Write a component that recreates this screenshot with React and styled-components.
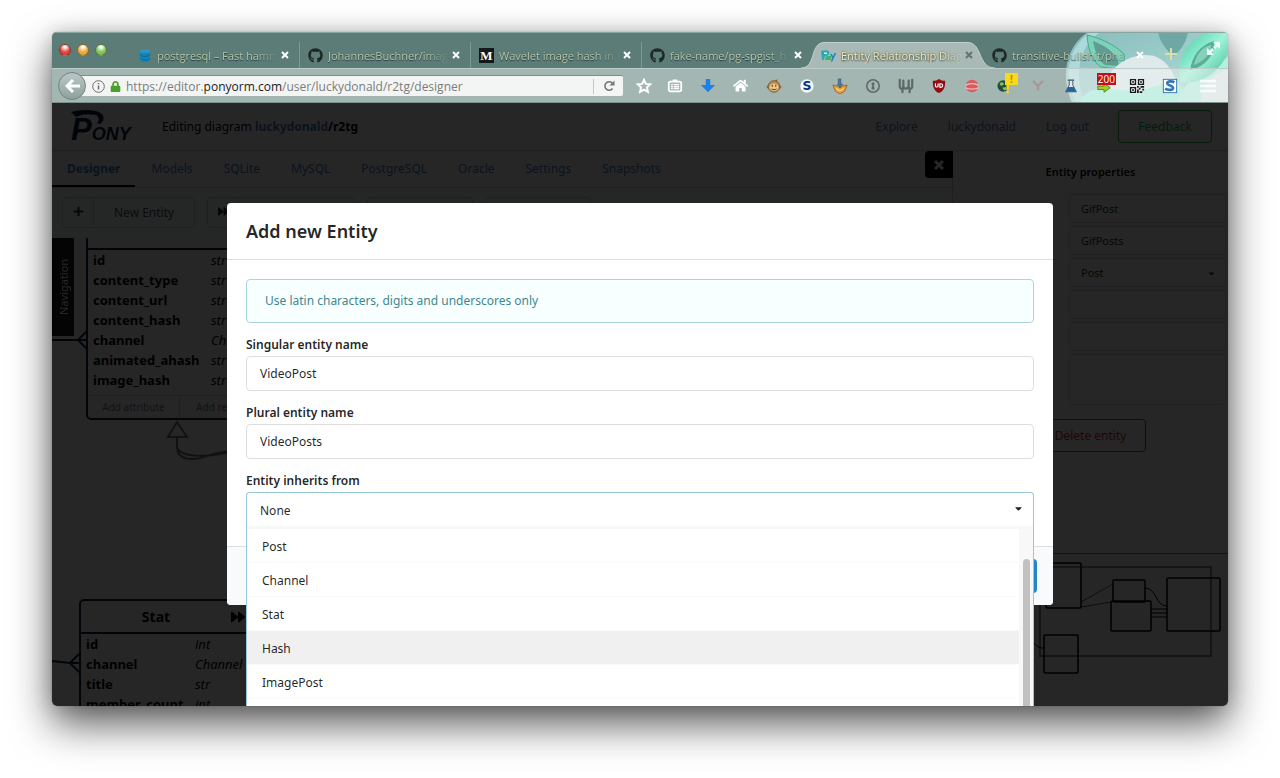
import React, { useState } from 'react'
import styled, { createGlobalStyle } from 'styled-components'
import { FaGithub, FaPlus, FaForward, FaLock, FaHome, FaCaretDown } from 'react-icons/fa'

const browserTabs = [
    { icon: 'database', title: 'postgresql – Fast hamm' },
    { icon: 'github', title: 'JohannesBuchner/imag' },
    { icon: 'medium', title: 'Wavelet image hash in P' },
    { icon: 'github', title: 'fake-name/pg-spgist_h' },
    { icon: 'pony', title: 'Entity Relationship Diag', active: true },
    { icon: 'github', title: 'transitive-bullshit/pha' },
];

const pageTabs = ['Designer', 'Models', 'SQLite', 'MySQL', 'PostgreSQL', 'Oracle', 'Settings', 'Snapshots'];

const postRows = [
    ['id', 'str'],
    ['content_type', 'str'],
    ['content_url', 'str'],
    ['content_hash', 'str'],
    ['channel', 'Channel'],
    ['animated_ahash', 'str'],
    ['image_hash', 'str'],
];

const statRows = [
    ['id', 'int'],
    ['channel', 'Channel'],
    ['title', 'str'],
    ['member_count', 'int'],
];

const parents = ['Post', 'Channel', 'Stat', 'Hash', 'ImagePost', 'GifPost'];

const TabIcon = ({ name }) => {
    if (name === 'github') return <FaGithub size={15} color='#1d2926' />
    if (name === 'medium') {
        return (
            <svg width='15' height='15' viewBox='0 0 15 15'>
                <rect width='15' height='15' fill='#14191a' />
                <text x='7.5' y='12' textAnchor='middle' fontFamily='Liberation Serif, serif' fontWeight='700' fontSize='13' fill='#fff'>M</text>
            </svg>
        )
    }
    if (name === 'database') {
        return (
            <svg width='15' height='15' viewBox='0 0 15 15'>
                <path d='M3 3v9c0 3 10 3 10 0V3z' fill='#1683b8' />
                <ellipse cx='8' cy='3' rx='5' ry='2' fill='#2b95c6' />
                <path d='M3 6.500c0 2.500 10 2.500 10 0M3 10c0 2.500 10 2.500 10 0' fill='none' stroke='#0c6896' />
            </svg>
        )
    }
    return (
        <svg width='15' height='15' viewBox='0 0 15 15'>
            <path d='M0 3c3-1 6-1 8 0 1 3-1 5-4 5l-1 4H1z' fill='#2ba7b5' />
            <path d='M3 4.500h3v1.500H3z' fill='#d8f0ea' />
            <path d='M5 8h5v4H4z' fill='#3fb56c' />
            <path d='M10 6l2 4 2.500-5M12 10l-1.500 3.500' fill='none' stroke='#1f86c5' strokeWidth='1.600' />
        </svg>
    )
}

const PersonaArt = () => (
    <Persona viewBox='0 0 190 71' aria-hidden='true'>
        <defs>
            <linearGradient id='mane' x1='0' y1='0' x2='1' y2='1'>
                <stop offset='0' stopColor='#8fc6c8' />
                <stop offset='1' stopColor='#bff0e6' />
            </linearGradient>
            <linearGradient id='lock' x1='0' y1='0' x2='1' y2='1'>
                <stop offset='0' stopColor='#3fcb9f' />
                <stop offset='0.500' stopColor='#9ff3d8' />
                <stop offset='1' stopColor='#35b98f' />
            </linearGradient>
        </defs>
        <path d='M50 0C28 14 22 44 34 71h156V0z' fill='url(#mane)' opacity='0.850' />
        <path d='M52 0C30 16 24 44 38 71h9C36 44 40 16 62 0z' fill='#b4dfe2' opacity='0.800' />
        <path d='M120 0h30c-2 12-8 18-14 24-8-6-14-14-16-24z' fill='#6fa7a5' />
        <path d='M49 3c1 16 6 27 14 32 8 1 16 2 20 1 3-4 4-10 3-14C76 12 62 6 49 3z' fill='#7fd0b8' stroke='#36b08a' />
        <path d='M55 9c2 12 6 20 12 24l14 1C80 22 68 14 55 9z' fill='#5f9c94' />
        <path d='M68 48c8-16 24-25 40-25 16 0 30 12 36 48H80z' fill='#dde9eb' />
        <path d='M42 71c4-14 18-16 38-13 22 2 38-2 56-12l20 25z' fill='#9df3da' />
        <path d='M140 71c2-16 16-26 34-36l16-10v46z' fill='#b5efe0' />
        <path d='M142 50c-4-26 10-46 34-50h14v20c-6 16-24 34-48 30z' fill='url(#lock)' />
        <path d='M152 38c2-14 10-25 24-29 2 12-8 26-24 29z' fill='#5aaf98' />
        <path d='M156 33c2-10 8-18 17-20 0 8-6 16-17 20z' fill='#9adfcb' opacity='0.700' />
        <path d='M163 71c0-18 10-28 27-34v34z' fill='#dfe9e8' />
    </Persona>
)

const S = { fill: 'none', strokeLinecap: 'round', strokeLinejoin: 'round' };

const toolbarItems = [
    {
        label: 'Bookmarks list', art: <>
            <rect x='2' y='4' width='14' height='11' rx='2' {...S} stroke='#fff' strokeWidth='2' />
            <path d='M7 2.500h4M5 7.500h1M8 7.500h5M5 9.800h1M8 9.800h5M5 12h1M8 12h5' {...S} stroke='#fff' strokeWidth='1.500' />
        </>
    },
    { label: 'Downloads', art: <path d='M6.500 1h5v7H17l-8 8L1 8h5.500z' fill='#1c82ea' /> },
    { label: 'Home', art: <FaHome size={17} color='#fff' /> },
    {
        label: 'Greasemonkey', art: <>
            <circle cx='2.500' cy='10' r='1.800' fill='#9a6a35' />
            <circle cx='15.500' cy='10' r='1.800' fill='#9a6a35' />
            <path d='M9 4l4-3-1 4z' fill='#8a5c2a' />
            <circle cx='9' cy='9.500' r='6.500' fill='#b98a4e' stroke='#7d5a30' />
            <ellipse cx='9' cy='10.500' rx='5.200' ry='4.400' fill='#e9c88c' />
            <path d='M7 8v1.500M11 8v1.500M6.500 12.500c1.500 1 3.500 1 5 0' {...S} stroke='#3d2a14' />
        </>
    },
    {
        label: 'Stylish', art: <>
            <circle cx='9' cy='9' r='7.500' fill='#f4f8fa' />
            <text x='9' y='14' textAnchor='middle' fontFamily='DejaVu Sans, sans-serif' fontWeight='700' fontSize='14' fill='#0b2f86'>S</text>
        </>
    },
    {
        label: 'Video downloader', art: <>
            <path d='M1 8l5 1 3 2 3-2 5-1-3 7-5 3-5-3z' fill='#e9a13b' stroke='#a55f16' />
            <path d='M7 1h3v6h2l-3 4-3-4h1z' fill='#4c7aa0' stroke='#2d526f' strokeWidth='0.600' />
            <path d='M5 12l3 2M13 12l-3 2' {...S} stroke='#fff2cc' />
        </>
    },
    {
        label: 'Page info', art: <>
            <circle cx='9' cy='9' r='7' {...S} stroke='#5f6968' strokeWidth='1.800' />
            <path d='M7.500 5h3v3l-1 1 1 1v3h-3v-3l1-1-1-1z' fill='#5f6968' />
        </>
    },
    { label: 'Wappalyzer', art: <path d='M2 2v7c0 4 4 4 4 0V3M6 9c0 4 5 4 6 0V3M12 9c0 4 4 4 4 0V2M5 12v4M13 12v4' {...S} stroke='#5f6968' strokeWidth='2.500' /> },
    {
        label: 'uBlock', art: <>
            <path d='M9 1c2 1.500 4 2 7 2 0 7-1 11-7 14-6-3-7-7-7-14 3 0 5-.5 7-2z' fill='#960b12' />
            <path d='M5 6.500v2.500c0 1.500 3 1.500 3 0V6.500M10 6.500h1c2.800 0 2.800 4 0 4h-1z' {...S} stroke='#fff' strokeWidth='1.300' />
        </>
    },
    {
        label: 'Eraser', art: <>
            <circle cx='9' cy='9' r='7' fill='#d85b60' />
            <path d='M2 8.500c2-3 12-3 14 0M2 11c3 2 11 2 14 0' {...S} stroke='#f3bcbc' strokeWidth='1.500' />
        </>
    },
    {
        label: 'Proxy', badge: '!', tone: 'yellow', art: <>
            <circle cx='7' cy='9' r='6.500' fill='#1d4f42' />
            <path d='M3 6c3-3 6 0 4 2s-4 0-4-2zM6 11l4-1 1 3-3 1z' fill='#8bc34a' />
            <path d='M12 8v4M12 15.500v.500' {...S} stroke='#f5cf2c' strokeWidth='3' />
        </>
    },
    { label: 'Vue', art: <path d='M4 4l5 5 5-5M9 9v4' {...S} stroke='#a89594' strokeWidth='2.500' /> },
    {
        label: 'Experiments', art: <>
            <path d='M7 3v5l-4 7.500h12L11 8V3' fill='#dfeaf0' stroke='#38505e' />
            <path d='M6 10h6l3 5.500H3z' fill='#27649b' />
            <path d='M6 2.500h6' {...S} stroke='#38505e' strokeWidth='1.400' />
        </>
    },
    { label: 'Feed', badge: '200', tone: 'red', art: <path d='M2 9h7V6l7 5-7 5v-3H2z' fill='#9ccc2e' stroke='#55801c' /> },
    {
        label: 'QR code', art: <>
            <rect x='1' y='1' width='16' height='16' fill='#e4eaea' />
            <path d='M1 1h7v7H1zM10 1h7v7h-7zM1 10h7v7H1z' fill='#171b1c' />
            <path d='M3 3h3v3H3zM12 3h3v3h-3zM3 12h3v3H3z' fill='#171b1c' stroke='#fff' />
            <path d='M9 9h2v2H9zM13 9h4v2h-4zM11 11h2v2h-2zM15 12h2v2h-2zM9 13h2v4H9zM12 15h3v2h-3z' fill='#171b1c' />
        </>
    },
    {
        label: 'Scrapbook', art: <>
            <rect x='1.500' y='1.500' width='15' height='15' fill='#fff' stroke='#2f6eae' />
            <path d='M14 5c-3-2-9-1.500-8 1.500 1 2 6 2 6.500 4.500.500 3-6 3-9 1' fill='none' stroke='#2f78bd' strokeWidth='3' />
        </>
    },
];

const Entity = ({ title, rows, x, y, width, typeCol, footer }) => (
    <EntityBox style={{ left: x, top: y, width }}>
        <EntityTitle>
            <span>{title}</span>
            <FaForward size={14} />
        </EntityTitle>
        <EntityRows>
            {rows.map(([name, type]) => (
                <EntityRow key={name} $col={typeCol}>
                    <b>{name}</b>
                    <i>{type}</i>
                </EntityRow>
            ))}
        </EntityRows>
        {footer && (
            <EntityFooter>
                <button>Add attribute</button>
                <button>Add relation</button>
            </EntityFooter>
        )}
    </EntityBox>
)

const BrowserChrome = () => (
    <Chrome>
        <PersonaArt />
        <TitleBar>
            <Lights>
                <Light $color='#e0443e' aria-label='Close window' />
                <Light $color='#e8a93a' aria-label='Minimise window' />
                <Light $color='#7cc35b' aria-label='Zoom window' />
            </Lights>
            {browserTabs.map((tab, i) => (
                <BrowserTab key={i} $active={tab.active} $edge={i === 3 || i === 5}>
                    {tab.active && (
                        <ActiveShape viewBox='0 0 196 26' preserveAspectRatio='none'>
                            <path d='M0 26C16 26 8 .5 24 .5H168C184 .5 178 26 196 26z' fill='#a9bab6' />
                            <path d='M0 26C16 26 8 .5 24 .5H168C184 .5 178 26 196 26' fill='none' stroke='#c3d1ce' />
                        </ActiveShape>
                    )}
                    <TabIcon name={tab.icon} />
                    <TabTitle $active={tab.active}>{tab.title}</TabTitle>
                    <TabClose $active={tab.active} aria-label='Close tab'>
                        <svg width='8' height='8' viewBox='0 0 8 8'><path d='M1 1l6 6M7 1L1 7' stroke='currentColor' strokeWidth='2' /></svg>
                    </TabClose>
                </BrowserTab>
            ))}
            <NewTab aria-label='New tab'>
                <svg width='14' height='14' viewBox='0 0 14 14'><path d='M7 1v12M1 7h12' stroke='#d9dfa5' strokeWidth='2' /></svg>
            </NewTab>
            <FullScreen aria-label='Full screen'>
                <svg width='13' height='13' viewBox='0 0 13 13'><path d='M6 0h7v7l-2.500-2.500L8 7 6 5l2.500-2.500zM0 6l2.500 2.500L5 6l2 2-2.500 2.500L7 13H0z' fill='#e8fbf5' /></svg>
            </FullScreen>
        </TitleBar>
        <NavBar>
            <Back aria-label='Back'>
                <svg width='15' height='14' viewBox='0 0 15 14'><path d='M8 1L2 7l6 6M2 7h13' fill='none' stroke='#fff' strokeWidth='3' /></svg>
            </Back>
            <UrlBar>
                <svg width='13' height='13' viewBox='0 0 13 13'>
                    <circle cx='6.500' cy='6.500' r='5.800' fill='none' stroke='#6c6c6c' />
                    <path d='M6.500 5.500v4M6.500 3v1.300' stroke='#6c6c6c' strokeWidth='1.500' />
                </svg>
                <FaLock size={11} color='#4aa02c' />
                <Url role='textbox' aria-label='Address'>https://editor.<b>ponyorm.com</b>/user/luckydonald/r2tg/designer</Url>
                <Reload aria-label='Reload'>
                    <svg width='12' height='12' viewBox='0 0 12 12'>
                        <path d='M9.500 8.500a4.200 4.200 0 1 1 0-5' fill='none' stroke='#777' strokeWidth='1.600' />
                        <path d='M11.500.500v5h-5z' fill='#777' />
                    </svg>
                </Reload>
            </UrlBar>
            <Star aria-label='Bookmark this page'>
                <svg width='16' height='16' viewBox='0 0 18 18'><path d='M9 2l2.100 4.600 5 .5-3.700 3.400 1 5L9 13l-4.400 2.500 1-5L1.900 7.100l5-.5z' fill='none' stroke='#fff' strokeWidth='2.200' /></svg>
            </Star>
            {toolbarItems.map((item) => (
                <ToolButton key={item.label} aria-label={item.label}>
                    <svg width='16' height='16' viewBox='0 0 18 18'>{item.art}</svg>
                    {item.badge && <Badge $tone={item.tone}>{item.badge}</Badge>}
                </ToolButton>
            ))}
            <MenuButton aria-label='Menu'>
                <svg width='16' height='14' viewBox='0 0 16 14'><path d='M0 2h16M0 7h16M0 12h16' stroke='#fff' strokeWidth='2.500' opacity='0.800' /></svg>
            </MenuButton>
        </NavBar>
    </Chrome>
)

const PropertiesPanel = () => (
    <Panel>
        <PanelClose aria-label='Close panel'>
            <svg width='10' height='10' viewBox='0 0 10 10'><path d='M1 1l8 8M9 1L1 9' stroke='#fff' strokeWidth='3' /></svg>
        </PanelClose>
        <PanelTitle>Entity properties</PanelTitle>
        <PanelForm>
            <label htmlFor='p-name'>Name</label>
            <PanelInput id='p-name' defaultValue='GifPost' />
            <label htmlFor='p-plural'>Plural name</label>
            <PanelInput id='p-plural' defaultValue='GifPosts' />
            <label htmlFor='p-parent'>Inherits from</label>
            <SelectWrap>
                <PanelInput as='select' id='p-parent' defaultValue='Post'>
                    <option>Post</option>
                </PanelInput>
                <FaCaretDown size={9} />
            </SelectWrap>
            <label htmlFor='p-table'>Table</label>
            <PanelInput id='p-table' />
            <label htmlFor='p-key'>Primary key</label>
            <PanelInput id='p-key' />
            <label htmlFor='p-notes'>Notes</label>
            <PanelInput as='textarea' id='p-notes' $tall />
        </PanelForm>
        <DeleteButton>Delete entity</DeleteButton>
        <MiniMap>
            <svg width='275' height='152' viewBox='0 0 275 152' fill='none' stroke='#000' strokeWidth='1.500'>
                <rect x='87' y='13' width='171' height='89' stroke='#666' />
                <rect x='93' y='9' width='35' height='45' rx='1' />
                <rect x='160' y='26' width='32' height='22' rx='1' />
                <rect x='158' y='47' width='40' height='30' rx='1' />
                <rect x='214' y='24' width='53' height='53' rx='1' />
                <rect x='91' y='81' width='34' height='38' rx='1' />
                <path d='M128 48l32-18M128 53l30-5' stroke='#555' strokeWidth='1' />
                <path d='M192 34c12 0 10 18 22 18M198 55h16M198 59h16M198 63h16M78 86c6 6 6 8 13 8' strokeWidth='1' />
            </svg>
        </MiniMap>
    </Panel>
)

const AddEntityModal = () => {
    const [singular, setSingular] = useState('VideoPost');
    const [plural, setPlural] = useState('VideoPosts');
    const [hovered, setHovered] = useState('Hash');

    return (
        <Dimmer>
            <Modal role='dialog' aria-labelledby='modal-title'>
                <ModalTitle id='modal-title'>Add new Entity</ModalTitle>
                <ModalContent>
                    <Message>Use latin characters, digits and underscores only</Message>
                    <Field>
                        <label htmlFor='singular'>Singular entity name</label>
                        <TextInput id='singular' value={singular} onChange={(e) => setSingular(e.target.value)} />
                    </Field>
                    <Field>
                        <label htmlFor='plural'>Plural entity name</label>
                        <TextInput id='plural' value={plural} onChange={(e) => setPlural(e.target.value)} />
                    </Field>
                    <Field>
                        <label htmlFor='parent'>Entity inherits from</label>
                        <SelectWrap>
                            <ParentSelect id='parent' defaultValue='None'>
                                <option>None</option>
                            </ParentSelect>
                            <FaCaretDown size={11} />
                            <Menu>
                                <Options role='listbox' aria-label='Entity inherits from'>
                                    {parents.map((name) => (
                                        <Option
                                            key={name}
                                            role='option'
                                            $hovered={name === hovered}
                                            onMouseEnter={() => setHovered(name)}
                                        >
                                            {name}
                                        </Option>
                                    ))}
                                </Options>
                                <ScrollTrack><ScrollThumb /></ScrollTrack>
                            </Menu>
                        </SelectWrap>
                    </Field>
                </ModalContent>
                <ModalFooter>
                    <CreateButton>Create</CreateButton>
                </ModalFooter>
            </Modal>
        </Dimmer>
    )
}

const App = () => {
    return (
        <Desktop>
            <GlobalStyle />
            <BrowserWindow>
                <BrowserChrome />
                <Page>
                    <PageHeader>
                        <Logo viewBox='0 0 62 34' role='img' aria-label='Pony'>
                            <path d='M1 3C8 1 20 0 29 3c6 3 6 9 1 12l-3-1c3-3 2-6-1-8-7-1-15-1-20 2z' fill='#0b2540' />
                            <text x='1' y='31' fontSize='31' fill='#0b2540'>P<tspan fontSize='18'>ONY</tspan></text>
                            <circle cx='14' cy='6' r='1' fill='#fff' />
                            <circle cx='18' cy='6' r='1' fill='#fff' />
                        </Logo>
                        <Crumb>Editing diagram <b><a href='#user'>luckydonald</a>/r2tg</b></Crumb>
                        <HeaderLinks>
                            <a href='#explore'>Explore</a>
                            <a href='#user'>luckydonald</a>
                            <a href='#logout'>Log out</a>
                        </HeaderLinks>
                        <Feedback>Feedback</Feedback>
                    </PageHeader>
                    <Workspace>
                        <Main>
                            <PageTabs>
                                {pageTabs.map((name, i) => (
                                    <PageTab key={name} href={'#' + name} $active={i === 0}>{name}</PageTab>
                                ))}
                            </PageTabs>
                            <Toolbar>
                                <IconButton><span><FaPlus size={11} /></span><em>New Entity</em></IconButton>
                                <IconButton><span><FaForward size={11} /></span><em>New Relation</em></IconButton>
                                <IconButton><em>Auto layout</em></IconButton>
                                <IconButton><em>Collapse all</em></IconButton>
                            </Toolbar>
                            <Canvas>
                                <NavigationTab>Navigation</NavigationTab>
                                <Wires viewBox='0 0 400 468' fill='none'>
                                    <path d='M0 102h26M26 102l9-9M26 102l9 9M26 102h9' stroke='#0b2540' strokeWidth='2' />
                                    <path d='M0 423l18 2M18 425l9-9M18 425l9 9M18 425h9' stroke='#0b2540' strokeWidth='2' />
                                    <path d='M125 184l-9 15h19zM125 199v10c0 14 16 14 30 9s20-5 40-5M125 209c2 10 30 12 60 3' stroke='#767676' strokeWidth='2' />
                                </Wires>
                                <Entity title='Post' rows={postRows} x={34} y={-23} width={186} typeCol={118} footer />
                                <Entity title='Stat' rows={statRows} x={27} y={361} width={176} typeCol={109} />
                            </Canvas>
                        </Main>
                        <PropertiesPanel />
                    </Workspace>
                    <AddEntityModal />
                </Page>
            </BrowserWindow>
        </Desktop>
    )
}

const GlobalStyle = createGlobalStyle`
    * {
        box-sizing: border-box;
    }
    body {
        margin: 0;
        background: #fff;
        font-family: "Noto Sans", sans-serif;
        font-size: 12px;
    }
    button, input, select, textarea {
        font: inherit;
        color: inherit;
        margin: 0;
        border: 0;
        background: none;
        padding: 0;
    }
    a {
        color: #4183c4;
        text-decoration: none;
    }
`

const Desktop = styled.div`
    height: 100vh;
    padding: 32px 52px 72px;
    display: flex;
`
const BrowserWindow = styled.div`
    flex: 1;
    min-width: 0;
    display: flex;
    flex-direction: column;
    border-radius: 5px;
    overflow: hidden;
    box-shadow: 0 0 1px rgba(0, 0, 0, 0.5), 0 0 18px rgba(0, 0, 0, 0.15), 0 18px 40px rgba(0, 0, 0, 0.65);
`

/* browser chrome */
const Chrome = styled.header`
    position: relative;
    overflow: hidden;
    flex: none;
    background: #5b7c77;
    font-family: "Open Sans", sans-serif;
    font-size: 11px;
`
const Persona = styled.svg`
    position: absolute;
    right: 0;
    top: 0;
    width: 190px;
    height: 71px;
`
const TitleBar = styled.div`
    position: relative;
    display: flex;
    height: 36px;
    padding-top: 9px;
    border-top: 1px solid #8ba6a1;
`
const Lights = styled.div`
    display: flex;
    gap: 6px;
    width: 77px;
    padding: 2px 0 0 7px;
    flex: none;
`
const Light = styled.button`
    width: 12px;
    height: 12px;
    border-radius: 50%;
    border: 1px solid rgba(60, 40, 20, 0.5);
    background: radial-gradient(circle at 50% 20%, #fff 5%, ${props => props.$color} 55%);
`
const BrowserTab = styled.div`
    position: relative;
    display: flex;
    align-items: center;
    flex: 0 1 171px;
    min-width: 0;
    padding: 0 10px 0 8px;
    border-right: 1px solid ${props => props.$active || props.$edge ? 'transparent' : 'rgba(160, 186, 176, 0.5)'};

    > svg {
        position: relative;
        flex: none;
    }
`
const ActiveShape = styled.svg`
    && {
        position: absolute;
        left: -12px;
        top: 0;
        width: calc(100% + 24px);
        height: 26px;
    }
`
const TabTitle = styled.span`
    position: relative;
    flex: 1;
    min-width: 0;
    margin: 0 2px 0 5px;
    overflow: hidden;
    white-space: nowrap;
    color: ${props => props.$active ? '#eceac2' : '#b1c4a8'};
    text-shadow: ${props => props.$active ? '0 1px 2px #4a4f3a, 0 0 2px #4a4f3a' : '0 1px 1px rgba(0, 0, 0, 0.6)'};
    mask-image: linear-gradient(to right, #000 80%, transparent);
`
const TabClose = styled.button`
    position: relative;
    display: flex;
    color: ${props => props.$active ? '#66726f' : '#fff'};
`
const NewTab = styled.button`
    position: relative;
    padding: 0 9px;
`
const FullScreen = styled.button`
    margin: 0 8px 12px auto;
    display: flex;
`
const NavBar = styled.div`
    position: relative;
    display: flex;
    align-items: center;
    height: 35px;
    padding: 0 12px 0 6px;
    background: rgba(235, 240, 238, 0.5);
    border-top: 1px solid #bccdc9;
    border-bottom: 1px solid #7c908c;
`
const Back = styled.button`
    position: relative;
    z-index: 1;
    display: grid;
    place-items: center;
    width: 28px;
    height: 28px;
    border-radius: 50%;
    border: 1px solid #72827f;
    background: linear-gradient(#b9c8c5, #8fa29e);
`
const UrlBar = styled.div`
    flex: 1;
    min-width: 0;
    display: flex;
    align-items: center;
    gap: 5px;
    height: 21px;
    margin-left: -6px;
    padding-left: 12px;
    background: #f3f5f5;
    border-top: 1px solid #7d8f8b;
    border-radius: 2px;
`
const Url = styled.div`
    flex: 1;
    overflow: hidden;
    white-space: nowrap;
    color: #7c7c7c;
    font-size: 12px;

    b {
        font-weight: 400;
        color: #222;
    }
`
const Reload = styled.button`
    display: grid;
    place-items: center;
    width: 30px;
    height: 15px;
    border-left: 1px solid #c4c8c8;
`
const Star = styled.button`
    display: grid;
    place-items: center;
    width: 28px;
    margin: 0 0 0 7px;
`
const ToolButton = styled.button`
    position: relative;
    display: grid;
    place-items: center;
    flex: none;
    width: 33px;
    height: 26px;
`
const Badge = styled.span`
    position: absolute;
    top: 0;
    right: ${props => props.$tone === 'red' ? '4px' : '3px'};
    min-width: 13px;
    height: 12px;
    padding: 0 1px;
    font-size: 10px;
    line-height: 12px;
    font-weight: ${props => props.$tone === 'red' ? 400 : 700};
    color: ${props => props.$tone === 'red' ? '#fff' : '#b88a00'};
    background: ${props => props.$tone === 'red' ? '#c80d14' : '#f8d91c'};
`
const MenuButton = styled.button`
    display: grid;
    place-items: center;
    width: 16px;
    margin: 0 0 0 14px;
`

/* page under the dimmer */
const Page = styled.main`
    position: relative;
    flex: 1;
    min-height: 0;
    display: flex;
    flex-direction: column;
    overflow: hidden;
    background: #fff;
`
const PageHeader = styled.div`
    display: flex;
    align-items: center;
    flex: none;
    height: 48px;
    padding: 0 16px 0 18px;
    border-bottom: 1px solid #d4d4d5;
`
const Logo = styled.svg`
    width: 62px;
    height: 34px;
    margin-bottom: 2px;
    overflow: visible;
    font-family: "Liberation Sans", sans-serif;
    font-weight: 700;
    font-style: italic;
`
const Crumb = styled.div`
    margin-left: 30px;
`
const HeaderLinks = styled.nav`
    display: flex;
    gap: 30px;
    margin: 0 29px 0 auto;
`
const Feedback = styled.button`
    width: 94px;
    height: 33px;
    border: 1px solid #21ba45;
    border-radius: 4px;
    color: #21ba45;
`
const Workspace = styled.div`
    flex: 1;
    min-height: 0;
    display: flex;
`
const Main = styled.div`
    flex: 1;
    min-width: 0;
    display: flex;
    flex-direction: column;
`
const PageTabs = styled.nav`
    display: flex;
    gap: 1px;
    flex: none;
    height: 37px;
    border-bottom: 1px solid #d4d4d5;
`
const PageTab = styled.a`
    padding: 0 15px;
    line-height: 36px;
    font-weight: ${props => props.$active ? 700 : 400};
    border-bottom: ${props => props.$active ? '2px solid #000' : '0'};
`
const Toolbar = styled.div`
    display: flex;
    gap: 12px;
    flex: none;
    height: 50px;
    padding: 9px 10px;
    background: #f9fafb;
`
const IconButton = styled.button`
    display: flex;
    align-items: center;
    height: 31px;
    border: 1px solid #d4d4d5;
    border-radius: 4px;
    color: #555;

    span {
        width: 31px;
        border-right: 1px solid #d4d4d5;
        line-height: 29px;
        color: #333;
    }
    em {
        font-style: normal;
        padding: 0 20px;
    }
`
const Canvas = styled.div`
    position: relative;
    flex: 1;
    min-height: 0;
    overflow: hidden;
`
const NavigationTab = styled.button`
    position: absolute;
    left: 0;
    top: 0;
    z-index: 2;
    width: 22px;
    height: 98px;
    background: #1b1c1d;
    color: #fff;
    writing-mode: vertical-rl;
    transform: rotate(180deg);
    font-size: 11px;
`
const Wires = styled.svg`
    position: absolute;
    left: 0;
    top: 0;
    width: 400px;
    height: 468px;
`
const EntityBox = styled.section`
    position: absolute;
    border: 2px solid #0b2540;
    border-radius: 5px;
    background: #fff;
    font-size: 13px;
`
const EntityTitle = styled.h3`
    display: flex;
    align-items: center;
    margin: 0;
    height: 33px;
    padding: 0 8px 0 0;
    font-size: 14px;
    border-bottom: 2px solid #0b2540;

    span {
        flex: 1;
        text-align: center;
    }
`
const EntityRows = styled.div`
    padding: 0 5px 5px;
`
const EntityRow = styled.div`
    display: grid;
    grid-template-columns: ${props => props.$col}px 1fr;
    line-height: 20px;
    white-space: nowrap;
`
const EntityFooter = styled.div`
    display: grid;
    grid-template-columns: 1fr 1fr;
    height: 23px;
    border-top: 1px solid #d4d4d5;
    font-size: 10px;
    color: #777;

    button + button {
        border-left: 1px solid #d4d4d5;
    }
`
const Panel = styled.aside`
    position: relative;
    flex: none;
    width: 276px;
    display: flex;
    flex-direction: column;
    border-left: 1px solid #d4d4d5;
    font-size: 11px;
`
const PanelClose = styled.button`
    position: absolute;
    right: 100%;
    top: 0;
    display: grid;
    place-items: center;
    width: 28px;
    height: 27px;
    background: #000;
    border-radius: 4px 0 0 4px;
`
const PanelTitle = styled.h2`
    margin: 0;
    line-height: 42px;
    text-align: center;
    font-size: 11px;
    font-weight: 600;
    border-bottom: 1px solid #eee;
`
const PanelForm = styled.div`
    display: grid;
    grid-template-columns: 98px 1fr;
    gap: 3px 8px;
    padding: 0 2px 0 10px;
    line-height: 28px;
    color: #333;
`
const PanelInput = styled.input`
    width: 100%;
    height: ${props => props.$tall ? '51px' : '29px'};
    padding: 0 11px;
    border: 1px solid #dededf;
    border-radius: 4px;
    appearance: none;
    resize: none;
    display: block;
`
const SelectWrap = styled.div`
    position: relative;

    > svg {
        position: absolute;
        right: 10px;
        top: 11px;
        pointer-events: none;
    }
`
const DeleteButton = styled.button`
    align-self: center;
    margin-top: 14px;
    width: 110px;
    height: 33px;
    border: 1px solid #db2828;
    border-radius: 4px;
    color: #db2828;
    font-size: 12px;
`
const MiniMap = styled.div`
    margin-top: auto;
    height: 153px;
    border-top: 1px solid #777;
`

/* modal */
const Dimmer = styled.div`
    position: absolute;
    inset: 0;
    z-index: 5;
    padding: 100px 175px 0;
    background: rgba(0, 0, 0, 0.85);
`
const Modal = styled.div`
    background: #fff;
    border-radius: 4px;
    color: rgba(0, 0, 0, 0.87);
`
const ModalTitle = styled.h1`
    margin: 0;
    padding: 0 19px;
    line-height: 56px;
    font-size: 18px;
    font-weight: 600;
    border-bottom: 1px solid #dededf;
`
const ModalContent = styled.div`
    padding: 19px;
`
const Message = styled.p`
    margin: 0;
    padding: 0 18px;
    line-height: 42px;
    color: #3f8791;
    background: #f8ffff;
    border: 1px solid #a9d5de;
    border-radius: 4px;
`
const Field = styled.div`
    margin-top: 13px;

    label {
        display: block;
        margin-bottom: 2px;
        line-height: 18px;
        font-size: 12px;
        font-weight: 600;
    }
`
const TextInput = styled.input`
    display: block;
    width: 100%;
    height: 35px;
    padding: 0 13px;
    border: 1px solid #dededf;
    border-radius: 4px;
`
const ParentSelect = styled(TextInput).attrs({ as: 'select' })`
    appearance: none;
    background: #fff;
    border-color: #96c8da;
    border-bottom: 0;
    border-radius: 4px 4px 0 0;
`
const Menu = styled.div`
    position: absolute;
    top: calc(100% - 1px);
    left: 0;
    right: 0;
    z-index: 3;
    display: flex;
    background: #fff;
    border: 1px solid #96c8da;
    border-top: 0;
`
const Options = styled.ul`
    flex: 1;
    margin: 0;
    padding: 0;
    list-style: none;
    border-top: 3px solid #f8f8f8;
`
const Option = styled.li`
    height: 34px;
    padding: 1px 15px 0;
    line-height: 33px;
    border-bottom: 1px solid #fafafa;
    background: ${props => props.$hovered ? '#f0f0f0' : '#fff'};
`
const ScrollTrack = styled.div`
    width: 14px;
    padding: 33px 3px 0 4px;
    background: #f8f8f8;
    display: flex;
`
const ScrollThumb = styled.div`
    flex: 1;
    background: #c1c1c1;
    border-radius: 4px;
`
const ModalFooter = styled.div`
    display: flex;
    justify-content: flex-end;
    padding: 12px 16px;
    background: #f9fafb;
    border-top: 1px solid #dededf;
    border-radius: 0 0 4px 4px;
`
const CreateButton = styled.button`
    height: 34px;
    padding: 0 20px;
    border-radius: 4px;
    background: #2185d0;
    color: #fff;
    font-weight: 700;
`
export default App
